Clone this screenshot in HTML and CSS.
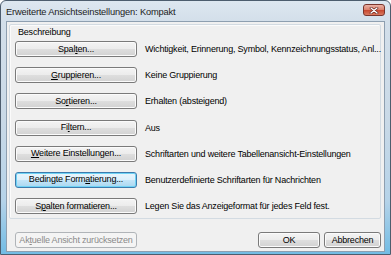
FILE: index.html
```html
<!DOCTYPE html>
<html>
<head>
<meta charset="utf-8">
<link rel="stylesheet" href="styles.css">
</head>
<body>
<div class="window">
  <div class="titlebar">
    <span class="title">Erweiterte Ansichtseinstellungen: Kompakt</span>
    <span class="close"><svg width="10" height="7" viewBox="0 0 10 7"><path d="M2 1 L8 6 M8 1 L2 6" stroke="#5a1a14" stroke-width="2.6" stroke-linecap="round"/><path d="M2 1 L8 6 M8 1 L2 6" stroke="#fff" stroke-width="1.4" stroke-linecap="round"/></svg></span>
  </div>
  <div class="client">
    <div class="group">
      <div class="legend">Beschreibung</div>
      <div class="rows">
        <div class="row"><button class="btn">Spal<u>t</u>en...</button><span class="desc">Wichtigkeit, Erinnerung, Symbol, Kennzeichnungsstatus, Anl...</span></div>
        <div class="row"><button class="btn"><u>G</u>ruppieren...</button><span class="desc">Keine Gruppierung</span></div>
        <div class="row"><button class="btn">So<u>r</u>tieren...</button><span class="desc">Erhalten (absteigend)</span></div>
        <div class="row"><button class="btn">Fi<u>l</u>tern...</button><span class="desc">Aus</span></div>
        <div class="row"><button class="btn"><u>W</u>eitere Einstellungen...</button><span class="desc">Schriftarten und weitere Tabellenansicht-Einstellungen</span></div>
        <div class="row"><button class="btn focus">Bedingte Form<u>a</u>tierung...</button><span class="desc">Benutzerdefinierte Schriftarten für Nachrichten</span></div>
        <div class="row"><button class="btn">S<u>p</u>alten formatieren...</button><span class="desc">Legen Sie das Anzeigeformat für jedes Feld fest.</span></div>
      </div>
    </div>
    <div class="footer">
      <button class="btn disabled">Ak<u>t</u>uelle Ansicht zurücksetzen</button>
      <div class="spacer"></div>
      <button class="btn ok">OK</button>
      <button class="btn cancel">Abbrechen</button>
    </div>
  </div>
</div>
</body>
</html>
```
FILE: styles.css
```css
html, body {
  margin: 0;
  padding: 0;
  width: 391px;
  height: 255px;
  overflow: hidden;
  background: #fff;
}
.window {
  box-sizing: border-box;
  width: 391px;
  height: 255px;
  border: 1px solid #4d5d6e;
  border-radius: 6px 6px 0 0;
  background: linear-gradient(180deg, #dde7f0 0px, #d3dfea 20px, #c9d9e7 120px, #b5d3e9 200px, #6fbbe4 255px);
  display: flex;
  flex-direction: column;
  font-family: "Liberation Sans", Arial, sans-serif;
  font-size: 9px;
  letter-spacing: -0.2px;
  color: #000;
}
.titlebar {
  height: 20px;
  flex: none;
  display: flex;
  align-items: flex-start;
  padding: 0 5px;
}
.title {
  font-size: 9.3px;
  letter-spacing: -0.15px;
  line-height: 12px;
  margin-top: 5px;
  color: #1c1c1c;
}
.close {
  margin-left: auto;
  margin-top: 3px;
  box-sizing: border-box;
  width: 22px;
  height: 12px;
  border: 1px solid #7a352c;
  border-radius: 3px;
  background: linear-gradient(180deg, #eab2a6 0%, #dc8470 45%, #c84a32 55%, #d97a60 100%);
  display: flex;
  align-items: center;
  justify-content: center;
}
.client {
  box-sizing: border-box;
  height: 231px;
  flex: none;
  margin: 0 5px;
  border: 1px solid #8e9fb0;
  background: #f0f0f0;
  display: flex;
  flex-direction: column;
  padding: 2px 3px 0 2px;
}
.group {
  box-sizing: border-box;
  height: 195px;
  border: 1px solid #d3dbe2;
  border-radius: 2px;
  box-shadow: inset 1px 1px 0 #fbfbfb;
  padding: 0 5px;
}
.legend {
  height: 11px;
  line-height: 11px;
  margin-top: 2px;
  padding-left: 3px;
}
.rows {
  display: flex;
  flex-direction: column;
  gap: 10.2px;
  margin-top: 3px;
}
.row {
  display: flex;
  align-items: center;
  height: 16px;
}
.btn {
  box-sizing: border-box;
  flex: none;
  width: 122px;
  height: 16px;
  white-space: nowrap;
  font-family: "Liberation Sans", Arial, sans-serif;
  font-size: 9px;
  letter-spacing: -0.2px;
  color: #000;
  border: 1px solid #7a7a7a;
  border-radius: 3px;
  background: linear-gradient(180deg, #f4f4f4 0%, #ececec 48%, #dedede 52%, #d2d2d2 100%);
  box-shadow: inset 0 0 0 1px #fbfbfb;
  padding: 0;
  line-height: 13px;
}
.btn u { text-decoration: underline; }
.btn.focus {
  border-color: #3d7bad;
  background: linear-gradient(180deg, #eaf5fc 0%, #dcf0fb 48%, #c3e5f8 52%, #aad7f0 100%);
  box-shadow: inset 0 0 0 1px #6fd3f5;
}
.desc {
  margin-left: 8px;
  white-space: nowrap;
}
.footer {
  display: flex;
  align-items: flex-start;
  margin-top: 13px;
  padding-left: 6px;
}
.spacer { flex: 1; }
.btn.disabled {
  color: #8a8a8a;
  border-color: #b0b4b8;
  background: #f4f4f4;
  box-shadow: none;
}
.btn.ok {
  width: 62px;
}
.btn.cancel {
  width: 57px;
  margin-left: 4px;
}
```
